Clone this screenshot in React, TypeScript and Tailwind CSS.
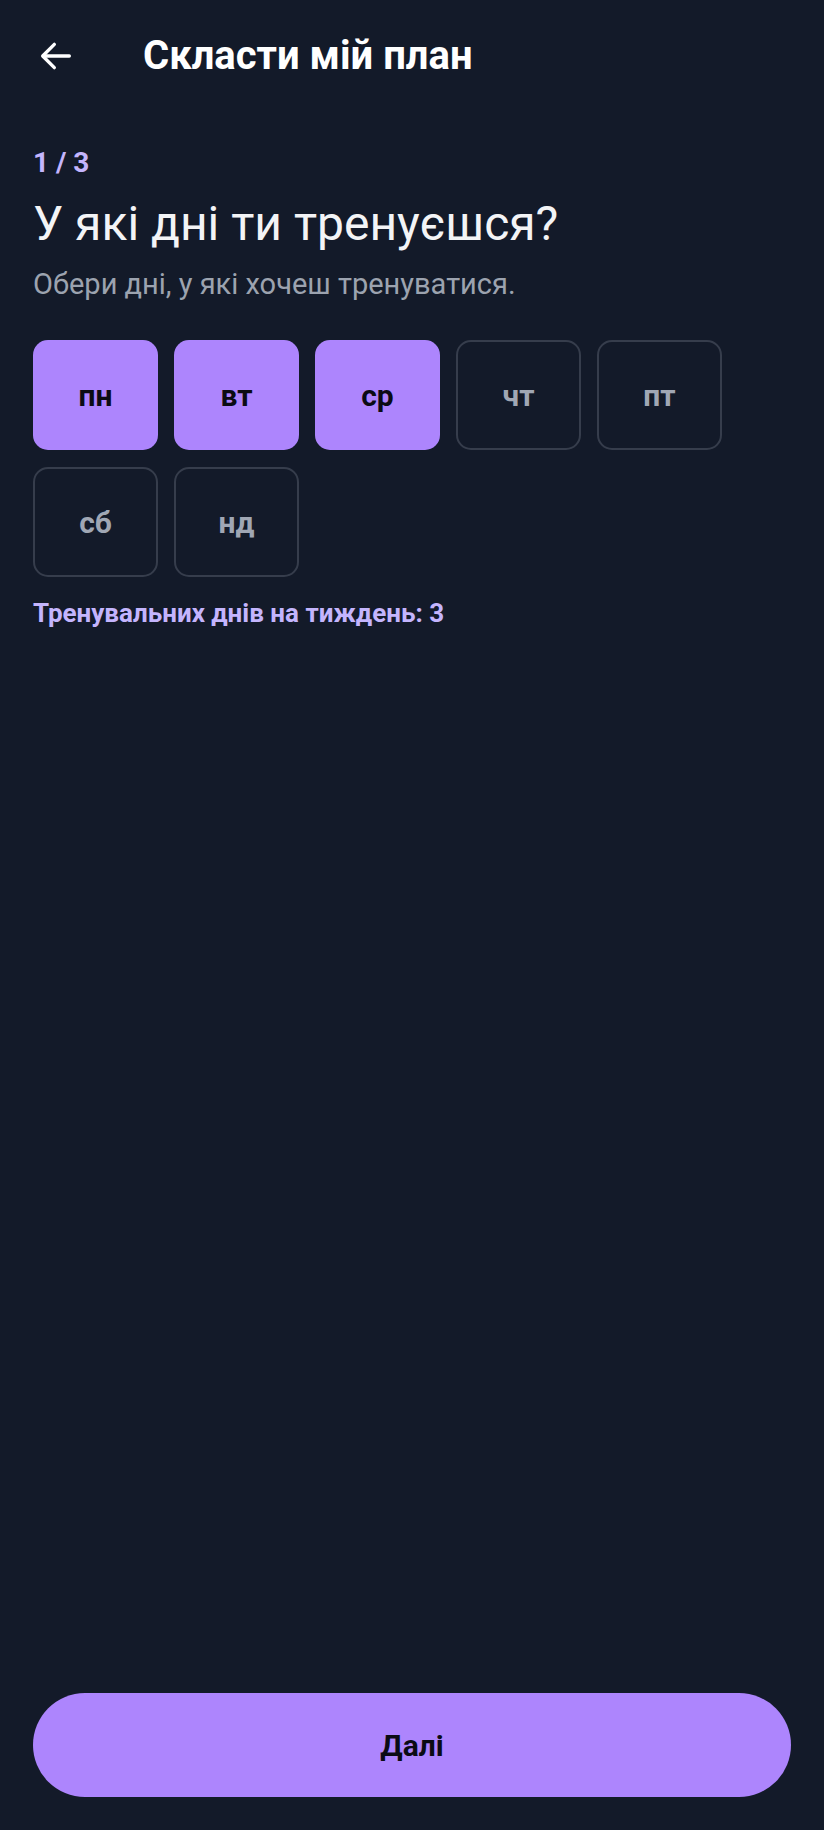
import { useState } from "react";

const DAYS = ["пн", "вт", "ср", "чт", "пт", "сб", "нд"];

export default function App() {
  const [selected, setSelected] = useState<string[]>(["пн", "вт", "ср"]);

  const toggle = (d: string) =>
    setSelected((s) => (s.includes(d) ? s.filter((x) => x !== d) : [...s, d]));

  return (
    <div
      className="flex min-h-[1830px] flex-col bg-[#131a29] text-white"
      style={{ fontFamily: "Roboto, 'Noto Sans', sans-serif" }}
    >
      {/* top bar */}
      <header className="flex h-[112px] items-center px-[36px]">
        <button className="flex h-[40px] w-[40px] items-center justify-center text-white">
          <svg width="40" height="40" viewBox="0 0 24 24" fill="none" stroke="currentColor" strokeWidth="2" strokeLinecap="round" strokeLinejoin="round">
            <path d="M20 12H4.5" />
            <path d="M11 5l-7 7 7 7" />
          </svg>
        </button>
        <h1 className="ml-[67px] text-[40px] font-bold leading-none">Скласти мій план</h1>
      </header>

      <main className="flex flex-1 flex-col px-[33px]">
        <div className="mt-[37px] text-[28px] font-bold leading-none text-[#c4b5fd]">1 / 3</div>
        <h2 className="mt-[19px] text-[48px] leading-[56px] text-[#f3f4f6]">У які дні ти тренуєшся?</h2>
        <p className="mt-[14px] text-[29px] leading-[36px] text-[#9ca3af]">Обери дні, у які хочеш тренуватися.</p>

        <div className="mt-[38px] flex flex-wrap gap-x-[16px] gap-y-[17px]">
          {DAYS.map((d) => {
            const on = selected.includes(d);
            return (
              <button
                key={d}
                onClick={() => toggle(d)}
                className={
                  on
                    ? "flex h-[110px] w-[125px] items-center justify-center rounded-[15px] bg-[#ad85fd] text-[30px] font-bold text-[#0b0b14]"
                    : "flex h-[110px] w-[125px] items-center justify-center rounded-[15px] border-2 border-[#363d4c] text-[30px] font-bold text-[#a0a7b4]"
                }
              >
                {d}
              </button>
            );
          })}
        </div>

        <p className="mt-[20px] text-[26px] font-bold leading-[32px] text-[#c4b5fd]">
          Тренувальних днів на тиждень: {selected.length}
        </p>

        <button className="mb-[33px] mt-auto flex h-[104px] w-full items-center justify-center rounded-full bg-[#ad85fd] text-[30px] font-bold text-[#0b0b14]">
          Далі
        </button>
      </main>
    </div>
  );
}
